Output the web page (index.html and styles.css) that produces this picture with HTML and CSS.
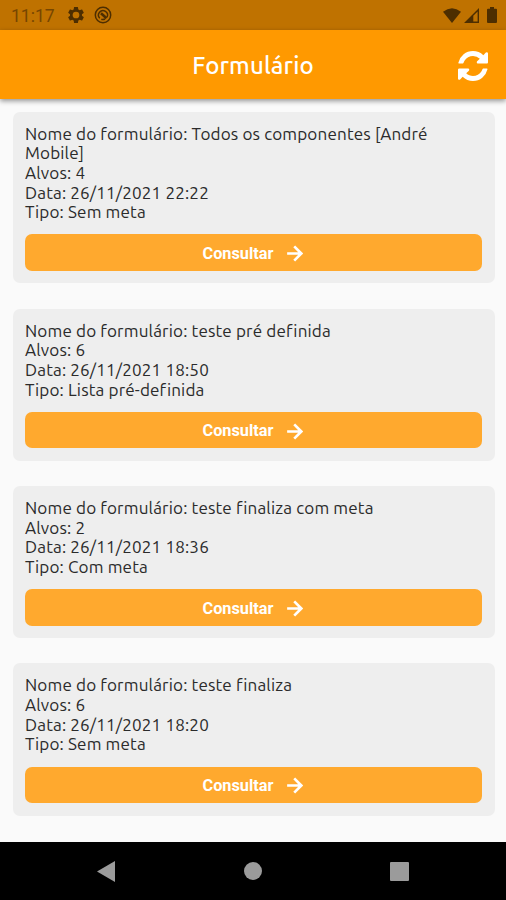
FILE: index.html
```
<!DOCTYPE html>
<html lang="pt-BR">
<head>
<meta charset="utf-8">
<meta name="viewport" content="width=device-width, initial-scale=1">
<title>Formulário</title>
<link rel="stylesheet" href="styles.css">
</head>
<body>
<svg class="defs" width="0" height="0" aria-hidden="true">
  <symbol id="arrow" viewBox="0 0 18 18"><path d="M1.200 9H15M8.700 1.500L16.200 9L8.700 16.500" fill="none" stroke="currentColor" stroke-width="2.800"/></symbol>
</svg>
<div class="statusbar">
  <span class="clock">11:17</span>
  <svg class="gear" viewBox="2 2 20 20"><path fill="currentColor" fill-rule="evenodd" d="M19.430 12.980a7.800 7.800 0 0 0 0-1.960l2.110-1.650c.190-.150.240-.420.120-.640l-2-3.460c-.120-.220-.390-.300-.610-.220l-2.490 1a7.300 7.300 0 0 0-1.690-.980l-.380-2.650A.490.490 0 0 0 14 2h-4c-.250 0-.460.180-.490.420l-.380 2.650c-.610.250-1.170.590-1.690.980l-2.490-1c-.230-.090-.490 0-.610.220l-2 3.460c-.130.220-.070.490.120.640l2.110 1.650a7.800 7.800 0 0 0 0 1.960l-2.110 1.650c-.190.150-.240.420-.120.640l2 3.460c.120.220.390.300.610.220l2.490-1c.520.400 1.080.730 1.690.980l.380 2.650c.030.240.240.420.490.420h4c.250 0 .460-.180.490-.420l.380-2.650c.610-.250 1.170-.590 1.690-.980l2.490 1c.230.090.490 0 .610-.220l2-3.460c.120-.220.070-.490-.120-.640zM12 16.200a4.200 4.200 0 1 1 0-8.400 4.200 4.200 0 0 1 0 8.400z"/></svg>
  <svg class="tracker" viewBox="0 0 18 18" fill="none" stroke="currentColor"><circle cx="9" cy="9" r="7.700" stroke-width="1.500"/><path d="M5.800 12.300A4.500 4.500 0 1 1 13 11.200M7.300 13.200A4.500 4.500 0 0 0 11 13" stroke-width="1.500"/><path d="M7 7.200L12.500 12.300" stroke-width="2.600"/></svg>
  <div class="signals">
    <svg class="wifi" viewBox="0 0 18 15"><path fill="currentColor" d="M0 3.700Q9-3.300 18 3.700L9 15z"/></svg>
    <svg class="cell" viewBox="0 0 15 15"><path fill="currentColor" fill-rule="evenodd" d="M15 0V15H0zM13.600 3.500L9.300 7.800V13.600H13.600z"/></svg>
    <svg class="battery" viewBox="0 0 10 16"><path fill="currentColor" d="M3 0H7V1.700H9Q10 1.700 10 2.700V15Q10 16 9 16H1Q0 16 0 15V2.700Q0 1.700 1 1.700H3z"/></svg>
  </div>
</div>
<header class="appbar">
  <h1>Formulário</h1>
  <svg class="refresh" viewBox="0 0 1536 1536"><path fill="currentColor" d="M1511 928q0 5-1 7-64 268-268 434.500T764 1536q-146 0-282.500-55T238 1324l-129 129q-19 19-45 19t-45-19T0 1408V960q0-26 19-45t45-19h448q26 0 45 19t19 45-19 45l-137 137q71 66 161 102t187 36q134 0 250-65t186-179q11-17 53-117 8-23 30-23h192q13 0 22.500 9.500t9.500 22.500zm25-800v448q0 26-19 45t-45 19h-448q-26 0-45-19t-19-45 19-45l138-138Q969 256 768 256q-134 0-250 65T332 500q-11 17-53 117-8 23-30 23H50q-13 0-22.500-9.500T18 608v-7q65-268 270-434.500T768 0q146 0 284 55.500T1297 212l130-129q19-19 45-19t45 19 19 45z"/></svg>
</header>
<main class="list">
  <article class="card">
    <p>Nome do formulário: Todos os componentes [André Mobile]</p>
    <p>Alvos: 4</p>
    <p>Data: 26/11/2021 22:22</p>
    <p>Tipo: Sem meta</p>
    <button class="consult">Consultar<svg><use href="#arrow"/></svg></button>
  </article>
  <article class="card">
    <p>Nome do formulário: teste pré definida</p>
    <p>Alvos: 6</p>
    <p>Data: 26/11/2021 18:50</p>
    <p>Tipo: Lista pré-definida</p>
    <button class="consult">Consultar<svg><use href="#arrow"/></svg></button>
  </article>
  <article class="card">
    <p>Nome do formulário: teste finaliza com meta</p>
    <p>Alvos: 2</p>
    <p>Data: 26/11/2021 18:36</p>
    <p>Tipo: Com meta</p>
    <button class="consult">Consultar<svg><use href="#arrow"/></svg></button>
  </article>
  <article class="card">
    <p>Nome do formulário: teste finaliza</p>
    <p>Alvos: 6</p>
    <p>Data: 26/11/2021 18:20</p>
    <p>Tipo: Sem meta</p>
    <button class="consult">Consultar<svg><use href="#arrow"/></svg></button>
  </article>
</main>
<nav class="navbar">
  <svg class="back" viewBox="0 0 18 21"><path fill="currentColor" d="M18 0V21L0 10.500z"/></svg>
  <span class="home"></span>
  <span class="recent"></span>
</nav>
</body>
</html>
```
FILE: styles.css
```
* { box-sizing: border-box; }
body {
  margin: 0;
  height: 900px;
  display: flex;
  flex-direction: column;
  overflow: hidden;
  background: #fafafa;
  color: #2b2b2b;
  font-family: Ubuntu, "Noto Sans", sans-serif;
}
svg { display: block; flex: none; }
.defs { position: absolute; }
.statusbar {
  flex: none;
  height: 30px;
  display: flex;
  align-items: center;
  padding: 0 9px 0 11px;
  background: #bf7200;
  color: #4d2e00;
}
.clock {
  width: 57px;
  font: 17.500px/30px Roboto, sans-serif;
  color: #764600;
  padding-top: 2px;
}
.gear { width: 16px; height: 16px; }
.tracker { width: 18px; height: 18px; margin-left: 10px; }
.signals { margin-left: auto; display: flex; align-items: center; }
.wifi { width: 18px; height: 15px; }
.cell { width: 15px; height: 15px; margin: 1px 8px 0 3px; }
.battery { width: 10px; height: 16px; }
.appbar {
  flex: none;
  height: 68.500px;
  display: grid;
  grid-template-columns: 1fr auto 1fr;
  align-items: center;
  padding: 2px 18.500px 0;
  background: #ff9900;
  color: #fff;
  box-shadow: 0 2px 5px rgba(0, 0, 0, .42);
}
h1 {
  grid-column: 2;
  margin: 2px 0 0;
  font-size: 24px;
  line-height: 30px;
  font-weight: 500;
  letter-spacing: .1px;
}
.refresh { width: 30px; height: 30px; justify-self: end; margin-top: 1px; }
.list {
  flex: 1;
  min-height: 0;
  display: flex;
  flex-direction: column;
  gap: 25.200px;
  padding: 13px 11.500px 0 13px;
}
.card {
  flex: none;
  padding: 12.100px 12.500px 12.400px 12px;
  border-radius: 7px;
  background: #eee;
}
.card p {
  margin: 0;
  font-size: 17.100px;
  letter-spacing: .14px;
  line-height: 19.650px;
}
.consult {
  width: 100%;
  height: 36.500px;
  margin: 12.600px 0 0;
  padding: 2px 1px 0 0;
  display: flex;
  align-items: center;
  justify-content: center;
  gap: 13px;
  border: 0;
  border-radius: 7px;
  background: #ffa92e;
  color: #fff;
  font: 700 16.300px/20px Roboto, sans-serif;
}
.consult svg { width: 17px; height: 17px; }
.navbar {
  flex: none;
  height: 58px;
  display: flex;
  align-items: center;
  justify-content: space-between;
  padding: 0 97px;
  background: #000;
  color: #9b9b9b;
}
.back { width: 18px; height: 21px; }
.home { width: 18px; height: 18px; border-radius: 50%; background: currentColor; }
.recent { width: 19px; height: 19px; border-radius: 1px; background: currentColor; }
```
